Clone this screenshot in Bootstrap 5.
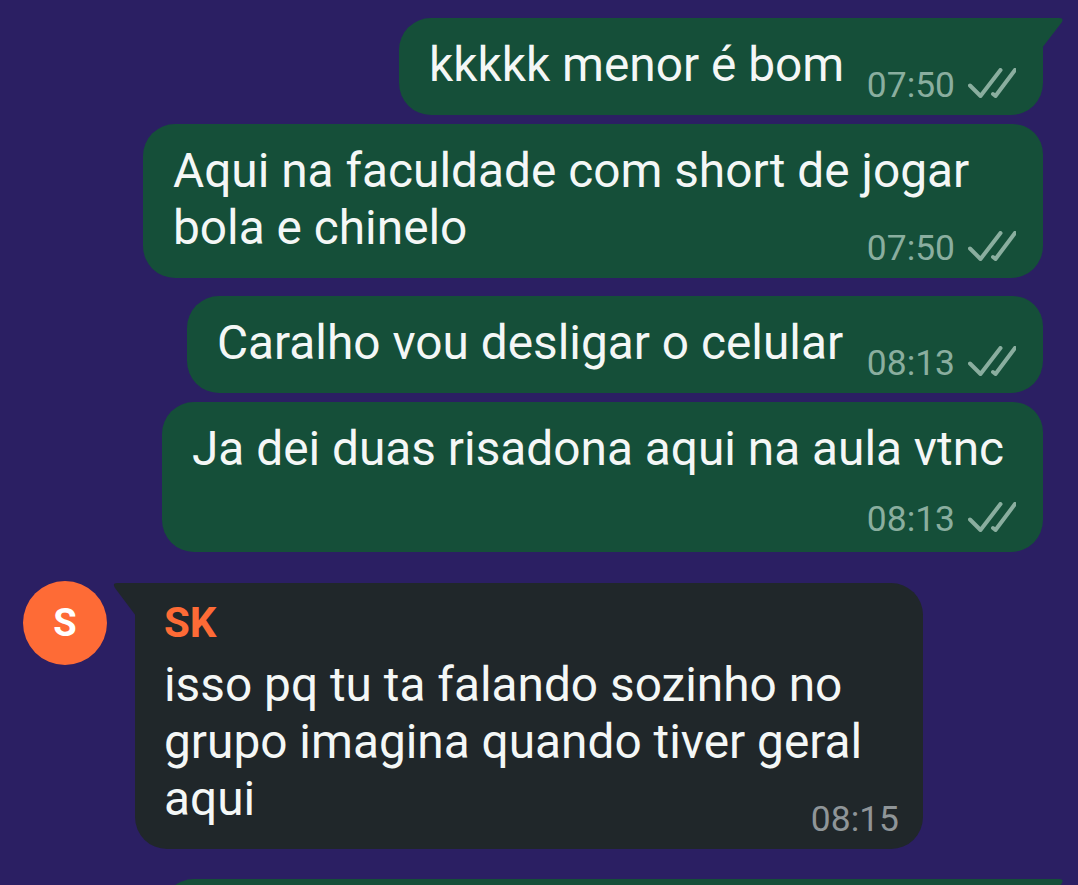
<!DOCTYPE html>
<html lang="pt">
<head>
<meta charset="utf-8">
<title>Conversa</title>
<link href="https://cdn.jsdelivr.net/npm/bootstrap@5.3.0/dist/css/bootstrap.min.css" rel="stylesheet">
<style>
html,body{height:885px;overflow:hidden;background:#2b1f63;}
body{font-family:Roboto,"Liberation Sans",sans-serif;color:#f4f7f6;}
.chat-area{padding:18px 35px 0 23px;}
.bubble-msg{position:relative;border-radius:32px;padding:19px 27px 12px 30px;font-size:47.8px;line-height:57px;}
.bubble-out{background:#154f39;border-top-right-radius:0;}
.bubble-out.join{border-top-right-radius:30px;}
.bubble-in{background:#20272a;border-top-left-radius:0;padding:19px 24px 12px 29px;width:788px;}
.w1{width:644px}.w2{width:900px}.w3{width:856px}.w4{width:881px}
.gap-s{margin-top:9px}.gap-m{margin-top:18px}.gap-l{margin-top:31px}.gap-n{margin-top:30px}
.meta-info{float:right;display:flex;align-items:center;margin-top:30px;height:36px;font-size:35.400px;line-height:36px;color:#8aae9f;margin-left:20px;}
.meta-info.drop{margin-top:23px;margin-bottom:3px;}
.bubble-in .meta-info{color:#8f9598;}
.ticks{width:48px;height:30px;margin-left:13px;margin-top:-4px;}
.tail-out{position:absolute;right:-21px;top:0;width:22px;height:30px;}
.tail-in{position:absolute;left:-22px;top:0;width:23px;height:33px;}
.avatar-dot{width:84px;height:84px;background:#fe6b36;font-size:38px;font-weight:700;color:#fff;margin-top:-2px;margin-right:28px;}
.sender{color:#fe6b36;font-weight:700;font-size:42px;line-height:41px;margin-bottom:14px;}
.clear-end::after{content:"";display:block;clear:both;}
</style>
</head>
<body>
<svg width="0" height="0" class="position-absolute">
  <defs>
    <symbol id="dbl" viewBox="0 0 48 30">
      <path d="M2 17.500L12.500 28L32.500 2M25 26L27.500 28L47 2" fill="none" stroke="currentColor" stroke-width="4" stroke-linecap="round" stroke-linejoin="round"/>
    </symbol>
  </defs>
</svg>
<main class="chat-area d-flex flex-column align-items-end">
  <div class="bubble-msg bubble-out w1 clear-end">
    <svg class="tail-out" viewBox="0 0 22 30"><path d="M0 0H17Q22 0 20 4L0 30Z" fill="#154f39"/></svg>
    kkkkk menor é bom<span class="meta-info">07:50<svg class="ticks"><use href="#dbl"/></svg></span>
  </div>
  <div class="bubble-msg bubble-out join w2 gap-s clear-end">
    Aqui na faculdade com short de jogar<br>bola e chinelo<span class="meta-info">07:50<svg class="ticks"><use href="#dbl"/></svg></span>
  </div>
  <div class="bubble-msg bubble-out join w3 gap-m clear-end">
    Caralho vou desligar o celular<span class="meta-info">08:13<svg class="ticks"><use href="#dbl"/></svg></span>
  </div>
  <div class="bubble-msg bubble-out join w4 gap-s clear-end">
    Ja dei duas risadona aqui na aula vtnc<br><span class="meta-info drop">08:13<svg class="ticks"><use href="#dbl"/></svg></span>
  </div>
  <div class="d-flex align-self-start align-items-start gap-l">
    <div class="avatar-dot rounded-circle d-flex align-items-center justify-content-center">S</div>
    <div class="bubble-msg bubble-in clear-end">
      <svg class="tail-in" viewBox="0 0 23 33"><path d="M23 0H4Q-1 0 2 5L23 33Z" fill="#20272a"/></svg>
      <div class="sender">SK</div>
      isso pq tu ta falando sozinho no<br>grupo imagina quando tiver geral<br>aqui<span class="meta-info">08:15</span>
    </div>
  </div>
  <div class="bubble-msg bubble-out w4 gap-n">
    <svg class="tail-out" viewBox="0 0 22 30"><path d="M0 0H17Q22 0 20 4L0 30Z" fill="#154f39"/></svg>
    &nbsp;
  </div>
</main>
</body>
</html>
